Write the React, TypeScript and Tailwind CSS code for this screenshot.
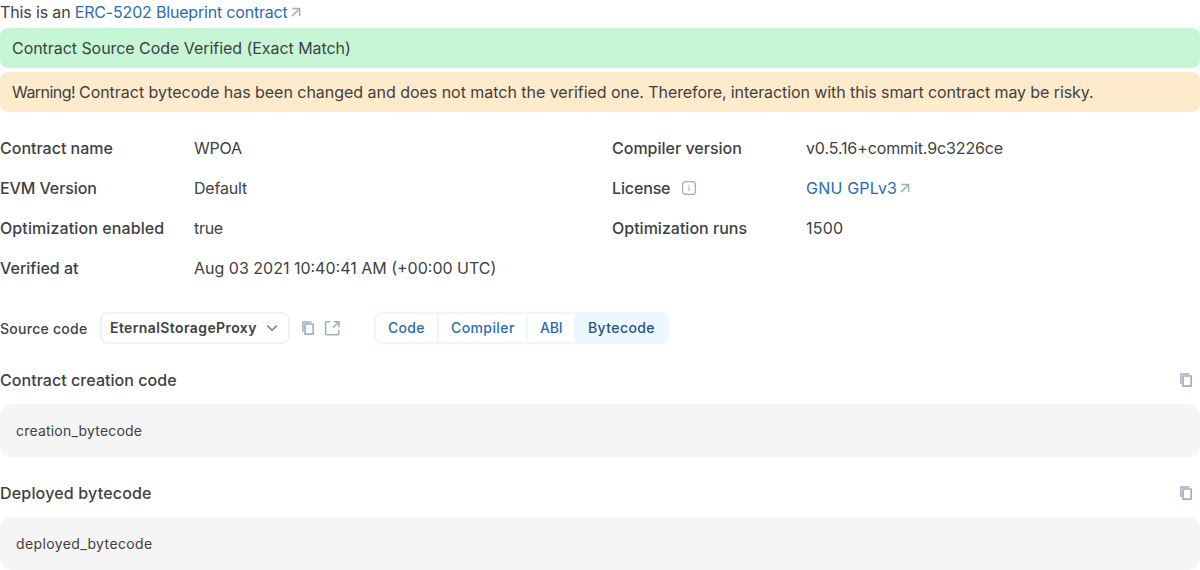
import React from 'react';

function ArrowIcon() {
  return (
    <svg className="ml-[3px] h-[10px] w-[10px] shrink-0 text-[#a0aec0]" viewBox="0 0 10 10" fill="none" stroke="currentColor" strokeWidth="1.5">
      <path d="M1.2 1.5h7.4v7.6M8.4 1.7 1 9.1" />
    </svg>
  );
}

function CopyIcon() {
  return (
    <svg className="h-5 w-5 text-[#a0aec0]" viewBox="0 0 20 20" fill="none" stroke="currentColor">
      <path d="M4.9 14V3.9h8.6" strokeWidth="1.5" />
      <rect x="7" y="6" width="8.2" height="10.2" rx=".3" strokeWidth="1.7" />
    </svg>
  );
}

function InfoIcon() {
  return (
    <svg className="h-5 w-5 text-[#a0aec0]" viewBox="0 0 20 20" fill="none" stroke="currentColor">
      <rect x="3.6" y="3.6" width="12.8" height="12.8" rx="3" strokeWidth="1.2" />
      <path d="M10 7v1.2M10 9v4" strokeWidth="1.1" />
    </svg>
  );
}

function OpenIcon() {
  return (
    <svg className="h-5 w-5 text-[#a0aec0]" viewBox="0 0 20 20" fill="none" stroke="currentColor" strokeWidth="1.6">
      <path d="M8.4 3.8H4.6a1 1 0 0 0-1 1v11a1 1 0 0 0 1 1h11.1a1 1 0 0 0 1-1V12" />
      <path d="M11.6 3.8h5.3v5.4M16.5 4.2 11 9.7" />
    </svg>
  );
}

function Field({ label, labelClass, hint, children }: { label: string; labelClass?: string; hint?: boolean; children?: React.ReactNode }) {
  return (
    <div className="flex h-6 items-center">
      <div className="flex w-[194px] shrink-0 items-center font-medium">
        <span className={labelClass}>{label}</span>
        {hint && <span className="ml-[9px]"><InfoIcon /></span>}
      </div>
      <div className="flex items-center">{children}</div>
    </div>
  );
}

function CodeBlock({ title, titleClass, value, valueClass }: { title: string; titleClass: string; value: string; valueClass: string }) {
  return (
    <section className="mt-6">
      <div className="mb-3 flex h-6 items-center justify-between pr-1">
        <h3 className={`font-medium ${titleClass}`}>{title}</h3>
        <button aria-label="Copy"><CopyIcon /></button>
      </div>
      <div className={`rounded-xl bg-[#f5f5f5] p-4 text-sm leading-[21px] ${valueClass}`}>{value}</div>
    </section>
  );
}

export default function App() {
  return (
    <div className="h-[570px] w-full overflow-hidden bg-white font-['Inter',sans-serif] text-base leading-6 text-[#404142]">
      <div className="flex h-6 items-center whitespace-pre">
        <span className="tracking-[-0.14px]">This is an </span>
        <a className="flex items-center tracking-[-0.19px] text-[#2b6cb0]">ERC-5202 Blueprint contract<ArrowIcon /></a>
      </div>
      <div className="mt-1 rounded-lg bg-[#c6f6d5] px-3 py-2 tracking-[-0.05px]">Contract Source Code Verified (Exact Match)</div>
      <div className="mt-1 rounded-lg bg-[#feebcb] px-3 py-2">
        <span className="tracking-[-0.55px]">Warning! </span>
        <span className="tracking-[-0.03px]">Contract bytecode has been changed and does not match the verified one. </span>
        <span className="tracking-[-0.09px]">Therefore, interaction with this smart contract may be risky.</span>
      </div>
      <div className="mt-6 grid grid-cols-2 gap-x-6 gap-y-4">
        <Field label="Contract name"><span className="tracking-[-0.25px]">WPOA</span></Field>
        <Field label="Compiler version"><span className="tracking-[-0.12px]">v0.5.16+commit.9c3226ce</span></Field>
        <Field label="EVM Version" labelClass="tracking-[-0.1px]"><span className="tracking-[-0.2px]">Default</span></Field>
        <Field label="License" labelClass="tracking-[-0.14px]" hint>
          <a className="flex items-center tracking-[0.2px] text-[#2b6cb0]">GNU GPLv3<ArrowIcon /></a>
        </Field>
        <Field label="Optimization enabled" labelClass="tracking-[0.1px]"><span className="tracking-[-0.3px]">true</span></Field>
        <Field label="Optimization runs"><span className="tracking-[0.2px]">1500</span></Field>
        <Field label="Verified at">Aug 03 2021 10:40:41 AM (+00:00 UTC)</Field>
      </div>
      <div className="mt-8 flex h-8 items-center text-sm">
        <span className="w-[100px] pt-px font-medium tracking-[0.27px]">Source code</span>
        <button className="flex h-8 w-[190px] items-center justify-between rounded-lg border-2 border-[#edf2f7] pr-1.5 pl-2 font-semibold tracking-[0.4px]">
          EternalStorageProxy
          <svg className="h-5 w-5 text-[#718096]" viewBox="0 0 20 20" fill="none" stroke="currentColor" strokeWidth="1.6" strokeLinecap="round" strokeLinejoin="round">
            <path d="m5.7 8 4.4 4.3L14.5 8" />
          </svg>
        </button>
        <button className="ml-2" aria-label="Copy"><CopyIcon /></button>
        <button className="ml-1" aria-label="Open"><OpenIcon /></button>
        <div className="ml-8 flex h-8 w-[295px] overflow-hidden rounded-lg border-2 border-[#ebf8ff] text-left font-medium text-[#2b6cb0]">
          <button className="w-[63px] border-r-2 border-[#ebf8ff] pl-3 text-left tracking-[0.3px]">Code</button>
          <button className="w-[89px] border-r-2 border-[#ebf8ff] pl-3 text-left tracking-[0.4px]">Compiler</button>
          <button className="w-[46px] pl-3 text-left tracking-[-0.2px]">ABI</button>
          <button className="flex-1 bg-[#ebf8ff] pl-[14px] text-left tracking-[0.4px] text-[#2c5282]">Bytecode</button>
        </div>
      </div>
      <CodeBlock title="Contract creation code" titleClass="tracking-[0.05px]" value="creation_bytecode" valueClass="tracking-[0.2px]" />
      <CodeBlock title="Deployed bytecode" titleClass="tracking-[0.18px]" value="deployed_bytecode" valueClass="tracking-[0.38px]" />
    </div>
  );
}
